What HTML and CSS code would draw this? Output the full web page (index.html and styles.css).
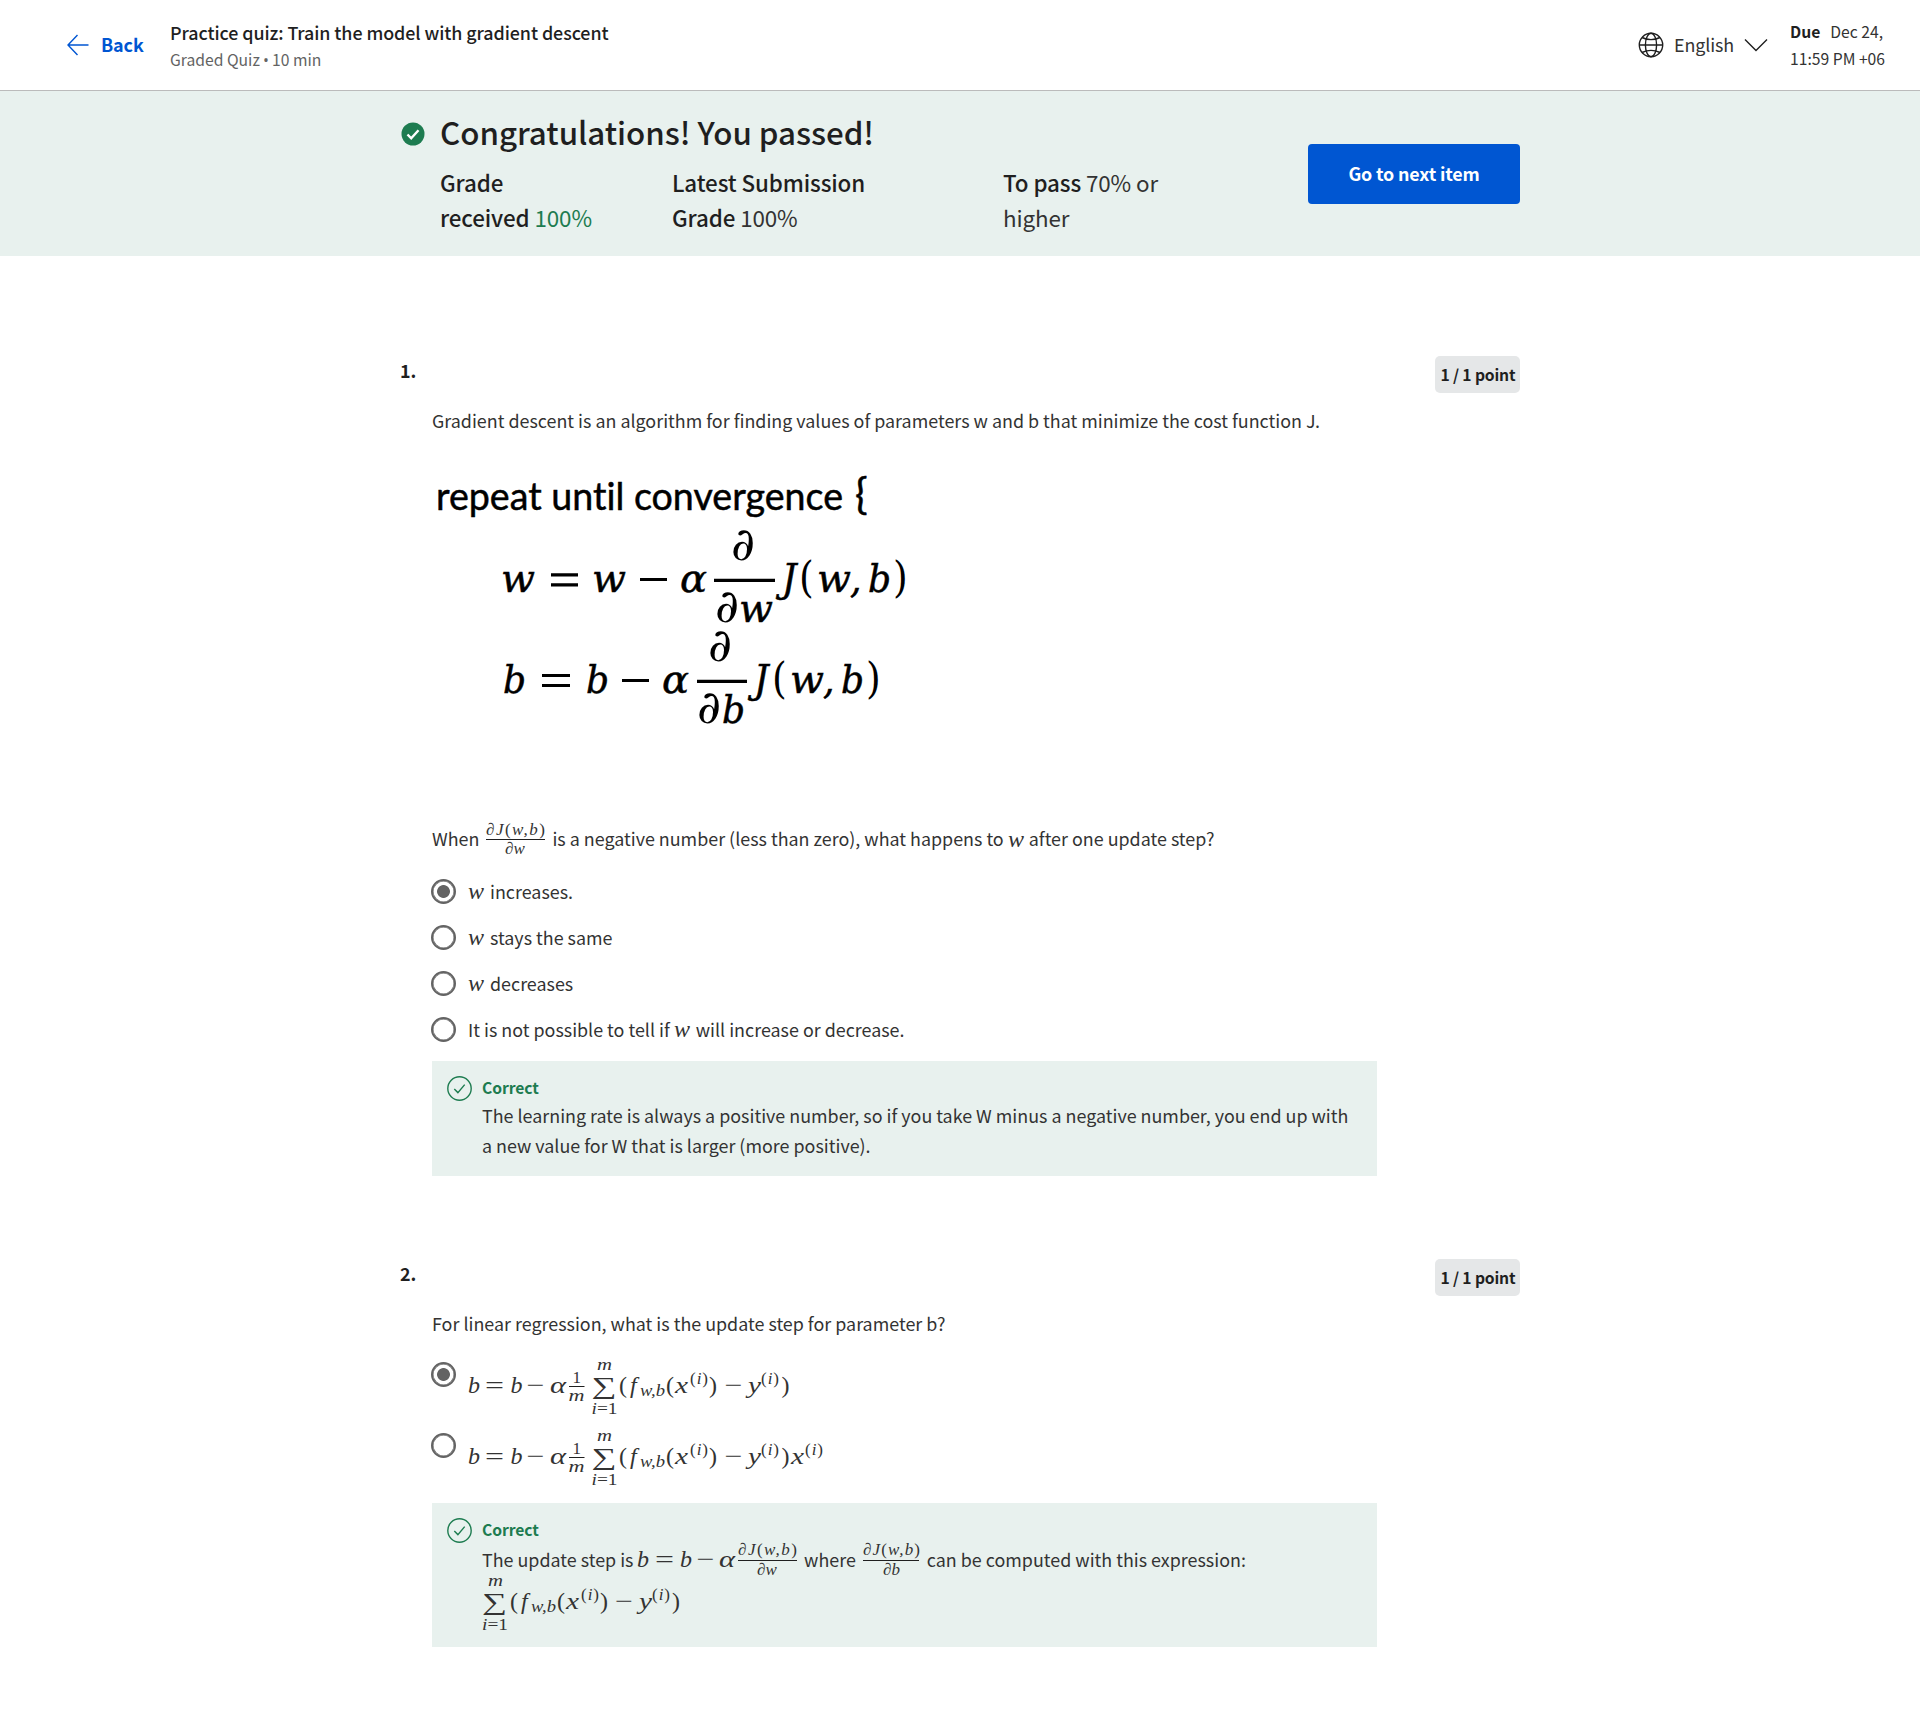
FILE: index.html
```html
<!DOCTYPE html>
<html lang="en">
<head>
<meta charset="utf-8">
<title>Practice quiz: Train the model with gradient descent</title>
<link rel="stylesheet" href="styles.css">
</head>
<body>
<header class="topbar">
  <a class="back">
    <svg class="arrow" width="22" height="22" viewBox="0 0 22 22"><path d="M21.5 11H1M10.5 1L1 11l9.500 10"/></svg>
    <span class="back-label">Back</span>
  </a>
  <div class="heading">
    <div class="title">Practice quiz: Train the model with gradient descent</div>
    <div class="subtitle">Graded Quiz <span class="dot">•</span> 10 min</div>
  </div>
  <div class="language">
    <svg class="globe" width="26" height="26" viewBox="0 0 26 26"><circle cx="13" cy="13" r="11.700"/><ellipse cx="13" cy="13" rx="5.600" ry="11.700"/><path d="M1.300 13h23.400M4 5.500q9 4.200 18 0M4 20.500q9-4.200 18 0"/></svg>
    <span class="language-name">English</span>
    <svg class="chevron" width="24" height="14" viewBox="0 0 24 14"><path d="M1 1.500l11 11 11-11"/></svg>
  </div>
  <div class="due"><b>Due</b><span class="due-date">Dec 24,</span><br>11:59 PM +06</div>
</header>

<section class="banner">
  <svg class="passed" width="24" height="24" viewBox="0 0 24 24"><circle cx="12" cy="12" r="11.500"/><path d="M6.500 12.500l3.700 3.800 7.300-8"/></svg>
  <div class="result">
    <h1>Congratulations! You passed!</h1>
    <div class="grades">
      <div class="grade received"><b>Grade<br>received</b> <span class="green">100%</span></div>
      <div class="grade latest"><b>Latest Submission<br>Grade</b> 100%</div>
      <div class="grade"><b>To pass</b> 70% or<br>higher</div>
    </div>
  </div>
  <button class="next">Go to next item</button>
</section>

<main>
  <section class="question">
    <div class="question-head"><span class="number">1.</span><span class="points">1 / 1 point</span></div>
    <div class="body">
      <p class="prompt intro">Gradient descent is an algorithm for finding values of parameters w and b that minimize the cost function J.</p>
      <svg class="algorithm" width="600" height="290" viewBox="432 460 600 290">
        <text class="plain" x="436" y="510" textLength="407" lengthAdjust="spacingAndGlyphs">repeat until convergence</text>
        <text class="brace" x="855" y="509">{</text>
        <g>
          <text x="501" y="592" textLength="34" lengthAdjust="spacingAndGlyphs">w</text><text x="592" y="592" textLength="34" lengthAdjust="spacingAndGlyphs">w</text><text x="680" y="592" textLength="27" lengthAdjust="spacingAndGlyphs">α</text>
          <text class="partial" x="731" y="559.500" textLength="24" lengthAdjust="spacingAndGlyphs">∂</text><text class="partial" x="715" y="622" textLength="24" lengthAdjust="spacingAndGlyphs">∂</text><text x="739" y="622" textLength="34" lengthAdjust="spacingAndGlyphs">w</text>
          <text x="782" y="592">J</text><text class="up" x="799" y="592">(</text><text x="817" y="592" textLength="34" lengthAdjust="spacingAndGlyphs">w</text><text x="850" y="592">,</text><text x="868" y="592">b</text><text class="up" x="893" y="592">)</text>
          <path d="M551 574.800h27M551 584.800h27M640 579.500h27M714 580.300h61"/>
        </g>
        <g>
          <text x="503" y="693">b</text><text x="586" y="693">b</text><text x="662" y="693" textLength="27" lengthAdjust="spacingAndGlyphs">α</text>
          <text class="partial" x="708" y="660.500" textLength="24" lengthAdjust="spacingAndGlyphs">∂</text><text class="partial" x="697" y="723" textLength="24" lengthAdjust="spacingAndGlyphs">∂</text><text x="722" y="723">b</text>
          <text x="754" y="693">J</text><text class="up" x="772" y="693">(</text><text x="790" y="693" textLength="34" lengthAdjust="spacingAndGlyphs">w</text><text x="823" y="693">,</text><text x="841" y="693">b</text><text class="up" x="866" y="693">)</text>
          <path d="M542 675.500h28M542 685.500h28M622 680.500h27M697 681.300h50"/>
        </g>
      </svg>
      <p class="prompt">When
        <svg class="math frac" width="59" height="40" viewBox="486 820 59 40"><text class="s" x="486" y="835.500" textLength="59">∂J<tspan class="r">(</tspan>w,b<tspan class="r">)</tspan></text><path d="M486 840.500h59"/><text class="s" x="505" y="855">∂w</text></svg>
        <span class="gap">is a negative number (less than zero), what happens to</span>
        <svg class="math var" width="17" height="20" viewBox="0 0 17 20"><text x="0" y="16.500">w</text></svg>
        after one update step?</p>
      <ul class="options">
        <li><i class="radio on"></i><svg class="math var" width="17" height="20" viewBox="0 0 17 20"><text x="0" y="16.500">w</text></svg><span>increases.</span></li>
        <li><i class="radio"></i><svg class="math var" width="17" height="20" viewBox="0 0 17 20"><text x="0" y="16.500">w</text></svg><span>stays the same</span></li>
        <li><i class="radio"></i><svg class="math var" width="17" height="20" viewBox="0 0 17 20"><text x="0" y="16.500">w</text></svg><span>decreases</span></li>
        <li><i class="radio"></i><span>It is not possible to tell if</span><svg class="math var" width="17" height="20" viewBox="0 0 17 20"><text x="0" y="16.500">w</text></svg><span>will increase or decrease.</span></li>
      </ul>
      <div class="feedback">
        <svg class="check" width="25" height="25" viewBox="0 0 25 25"><circle cx="12.500" cy="12.500" r="11.700"/><path d="M7.300 13l3.600 3.600 6.800-8"/></svg>
        <div>
          <div class="verdict">Correct</div>
          <p>The learning rate is always a positive number, so if you take W minus a negative number, you end up with<br>a new value for W that is larger (more positive).</p>
        </div>
      </div>
    </div>
  </section>

  <section class="question second">
    <div class="question-head"><span class="number">2.</span><span class="points">1 / 1 point</span></div>
    <div class="body">
      <p class="prompt">For linear regression, what is the update step for parameter b?</p>
      <ul class="options formulas">
        <li><i class="radio on"></i>
          <svg class="math" width="370" height="71" viewBox="468 1352 370 71">
            <text x="468" y="1393">b</text><text class="r" x="485" y="1393" textLength="19" lengthAdjust="spacingAndGlyphs">=</text><text x="510.500" y="1393">b</text><text class="r" x="526.500" y="1393" textLength="18" lengthAdjust="spacingAndGlyphs">−</text><text x="550" y="1393" textLength="16" lengthAdjust="spacingAndGlyphs">α</text>
            <text class="s r" x="572.500" y="1383">1</text><path d="M569 1386.500h15.500"/><text class="s" x="568.500" y="1401" textLength="16" lengthAdjust="spacingAndGlyphs">m</text>
            <text class="s" x="597" y="1370" textLength="15" lengthAdjust="spacingAndGlyphs">m</text><text class="sum" x="591.500" y="1394" textLength="25" lengthAdjust="spacingAndGlyphs">∑</text><text class="s" x="591.500" y="1413.500" textLength="26" lengthAdjust="spacingAndGlyphs">i<tspan class="r">=1</tspan></text>
            <text class="r" x="619" y="1393">(</text><text x="630" y="1393">f</text><text class="s" x="640" y="1396" textLength="25" lengthAdjust="spacingAndGlyphs">w,b</text><text class="r" x="666" y="1393">(</text><text x="675" y="1393" textLength="13" lengthAdjust="spacingAndGlyphs">x</text><text class="s" x="690" y="1384" textLength="18"><tspan class="r">(</tspan>i<tspan class="r">)</tspan></text><text class="r" x="709" y="1393">)</text><text class="r" x="724.500" y="1393" textLength="18" lengthAdjust="spacingAndGlyphs">−</text><text x="748" y="1393" textLength="13" lengthAdjust="spacingAndGlyphs">y</text><text class="s" x="761" y="1384" textLength="18"><tspan class="r">(</tspan>i<tspan class="r">)</tspan></text><text class="r" x="781.500" y="1393">)</text>
          </svg></li>
        <li><i class="radio"></i>
          <svg class="math" width="370" height="71" viewBox="468 1352 370 71">
            <text x="468" y="1393">b</text><text class="r" x="485" y="1393" textLength="19" lengthAdjust="spacingAndGlyphs">=</text><text x="510.500" y="1393">b</text><text class="r" x="526.500" y="1393" textLength="18" lengthAdjust="spacingAndGlyphs">−</text><text x="550" y="1393" textLength="16" lengthAdjust="spacingAndGlyphs">α</text>
            <text class="s r" x="572.500" y="1383">1</text><path d="M569 1386.500h15.500"/><text class="s" x="568.500" y="1401" textLength="16" lengthAdjust="spacingAndGlyphs">m</text>
            <text class="s" x="597" y="1370" textLength="15" lengthAdjust="spacingAndGlyphs">m</text><text class="sum" x="591.500" y="1394" textLength="25" lengthAdjust="spacingAndGlyphs">∑</text><text class="s" x="591.500" y="1413.500" textLength="26" lengthAdjust="spacingAndGlyphs">i<tspan class="r">=1</tspan></text>
            <text class="r" x="619" y="1393">(</text><text x="630" y="1393">f</text><text class="s" x="640" y="1396" textLength="25" lengthAdjust="spacingAndGlyphs">w,b</text><text class="r" x="666" y="1393">(</text><text x="675" y="1393" textLength="13" lengthAdjust="spacingAndGlyphs">x</text><text class="s" x="690" y="1384" textLength="18"><tspan class="r">(</tspan>i<tspan class="r">)</tspan></text><text class="r" x="709" y="1393">)</text><text class="r" x="724.500" y="1393" textLength="18" lengthAdjust="spacingAndGlyphs">−</text><text x="748" y="1393" textLength="13" lengthAdjust="spacingAndGlyphs">y</text><text class="s" x="761" y="1384" textLength="18"><tspan class="r">(</tspan>i<tspan class="r">)</tspan></text><text class="r" x="781.500" y="1393">)</text>
            <text x="791" y="1393" textLength="13" lengthAdjust="spacingAndGlyphs">x</text><text class="s" x="805" y="1384" textLength="18"><tspan class="r">(</tspan>i<tspan class="r">)</tspan></text>
          </svg></li>
      </ul>
      <div class="feedback tall">
        <svg class="check" width="25" height="25" viewBox="0 0 25 25"><circle cx="12.500" cy="12.500" r="11.700"/><path d="M7.300 13l3.600 3.600 6.800-8"/></svg>
        <div>
          <div class="verdict">Correct</div>
          <p class="line">The update step is
            <svg class="math frac first" width="160" height="40" viewBox="637 1540 160 40"><text x="637" y="1567.300">b</text><text class="r" x="655" y="1567.300" textLength="19" lengthAdjust="spacingAndGlyphs">=</text><text x="680" y="1567.300">b</text><text class="r" x="696.500" y="1567.300" textLength="18" lengthAdjust="spacingAndGlyphs">−</text><text x="719" y="1567.300" textLength="16" lengthAdjust="spacingAndGlyphs">α</text><text class="s" x="738" y="1555" textLength="59">∂J<tspan class="r">(</tspan>w,b<tspan class="r">)</tspan></text><path d="M738 1560.500h59"/><text class="s" x="757" y="1575">∂w</text></svg>
            <span class="gap">where</span>
            <svg class="math frac" width="57" height="40" viewBox="863 1540 57 40"><text class="s" x="863" y="1555" textLength="57">∂J<tspan class="r">(</tspan>w,b<tspan class="r">)</tspan></text><path d="M863 1560.500h56"/><text class="s" x="883" y="1575">∂b</text></svg>
            <span class="gap">can be computed with this expression:</span></p>
          <svg class="math block" width="220" height="60" viewBox="592 1358 220 60">
            <text class="s" x="598" y="1370" textLength="15" lengthAdjust="spacingAndGlyphs">m</text><text class="sum" x="592" y="1394" textLength="25" lengthAdjust="spacingAndGlyphs">∑</text><text class="s" x="592" y="1413.500" textLength="26" lengthAdjust="spacingAndGlyphs">i<tspan class="r">=1</tspan></text>
            <text class="r" x="620" y="1393">(</text><text x="631" y="1393">f</text><text class="s" x="641" y="1396" textLength="25" lengthAdjust="spacingAndGlyphs">w,b</text><text class="r" x="667" y="1393">(</text><text x="676" y="1393" textLength="13" lengthAdjust="spacingAndGlyphs">x</text><text class="s" x="691" y="1384" textLength="18"><tspan class="r">(</tspan>i<tspan class="r">)</tspan></text><text class="r" x="710" y="1393">)</text><text class="r" x="725" y="1393" textLength="18" lengthAdjust="spacingAndGlyphs">−</text><text x="749" y="1393" textLength="13" lengthAdjust="spacingAndGlyphs">y</text><text class="s" x="762" y="1384" textLength="18"><tspan class="r">(</tspan>i<tspan class="r">)</tspan></text><text class="r" x="782" y="1393">)</text>
          </svg>
        </div>
      </div>
    </div>
  </section>
</main>
</body>
</html>
```
FILE: styles.css
```css
* { box-sizing: border-box; }
body {
  margin: 0;
  min-height: 1727px;
  background: #fff;
  color: #333;
  font: 400 17.9px/30px "Noto Sans CJK SC", "Noto Sans", sans-serif;
}
h1, p, ul { margin: 0; padding: 0; }
svg { display: block; flex: none; overflow: visible; }
svg path, svg circle, svg ellipse { fill: none; stroke: #1f1f1f; stroke-width: 1.4; }

.topbar {
  display: flex;
  height: 91px;
  padding-left: 67px;
  border-bottom: 1px solid #bbb;
  white-space: nowrap;
}
.back { display: flex; align-items: center; gap: 12px; width: 103px; height: 90px; color: #0056d2; font-weight: 700; }
.back-label { margin-top: -2px; letter-spacing: -0.1px; }
.back .arrow path { stroke: #0056d2; }
.heading { width: 1468px; padding-top: 17px; }
.title { font-weight: 500; color: #1f1f1f; letter-spacing: -0.08px; }
.subtitle { font-size: 15.7px; line-height: 25px; color: #636363; }
.dot { font-family: "Open Sans", sans-serif; margin: 0 -0.4px; }
.language { display: flex; align-items: center; height: 90px; width: 152px; }
.language-name { width: 60px; margin: -2px 10px 0 10px; letter-spacing: -0.1px; }
.due { padding-top: 18px; font-size: 15.7px; line-height: 27px; }
.due b { margin-right: 10px; font-weight: 700; color: #1f1f1f; }

.banner { display: flex; height: 165px; padding: 20px 0 0 401px; background: #e8f1ee; white-space: nowrap; }
.passed { margin: 10.5px 15px 0 0; }
.passed circle { fill: #1d7c50; stroke: none; }
.passed path { stroke: #fff; stroke-width: 2.4; }
.result { width: 868px; padding-top: 1px; }
h1 { font-size: 31.3px; font-weight: 500; line-height: 40px; letter-spacing: -0.03px; color: #1f1f1f; }
.grades { display: flex; margin-top: 13px; font-size: 22.4px; line-height: 35px; }
.grade b { font-weight: 500; color: #1f1f1f; }
.grade { letter-spacing: -0.12px; }
.received { width: 232px; }
.latest { width: 331px; }
.green { color: #1d7c50; }
.next {
  width: 212px;
  height: 60px;
  margin-top: 33px;
  padding: 0 0 2px;
  border: 0;
  border-radius: 4px;
  background: #0056d2;
  color: #fff;
  font: 700 17.9px/30px "Noto Sans CJK SC", sans-serif;
  letter-spacing: -0.15px;
}

main { width: 1120px; margin: 100px 0 0 400px; }
.second { margin-top: 83px; }
.question-head { display: flex; justify-content: space-between; height: 49px; font-weight: 700; color: #1f1f1f; }
.number { line-height: 28px; }
.points { width: 85px; height: 37px; padding-left: 1px; border-radius: 5px; background: #e5e7e8; font-size: 15.7px; line-height: 38px; text-align: center; white-space: nowrap; letter-spacing: -0.15px; }
.body { width: 977px; padding-left: 32px; }
.prompt { height: 30px; white-space: nowrap; }
.algorithm { margin: 25px 0 73px; }
.algorithm text { font: italic 40px "DejaVu Serif Condensed", "DejaVu Serif", serif; fill: #000; stroke: #000; stroke-width: 0.5; }
.algorithm .partial { font-size: 46px; stroke: none; }
.algorithm .up { font-style: normal; font-size: 42px; stroke: none; }
.algorithm .plain { font: 39.5px Lato, sans-serif; font-variant-ligatures: none; }
.algorithm .brace { font: 42px Lato, sans-serif; }
.algorithm path { stroke: #000; stroke-width: 3.2; }

.math text { font: italic 24px "Liberation Serif", serif; fill: #333; }
.math .s { font-size: 17px; }
.math .r { font-style: normal; }
.math .sum { font-size: 24px; font-style: normal; }
.math path { stroke-width: 1; }
.prompt .math, .line .math { display: inline-block; }
.frac { height: 40px; margin: -10px 0 -10px 3px; vertical-align: -3px; }
.line .frac { vertical-align: -3px; }
.line .first { margin-left: -1px; }
.line .first + .gap { margin-left: 3.5px; }
.var { vertical-align: -4px; }
.gap { margin-left: 3px; }

.options { list-style: none; margin-top: 16px; }
.options li { display: flex; align-items: center; height: 46px; white-space: nowrap; }
.options li span { margin: -2px 4px 0 0; }
.options .var { margin-right: 5px; }
.radio { flex: none; width: 25px; height: 25px; margin: -1px 12px 0 -1px; border: 2px solid #636363; box-shadow: inset 0 0 0 0.5px #636363; border-radius: 50%; }
.on { background: radial-gradient(circle, #636363 6px, transparent 6.8px); }
.formulas { margin-top: 14px; }
.formulas li { height: 71px; align-items: flex-start; }
.formulas .radio { margin-top: 10px; }

.feedback { display: flex; width: 945px; height: 115px; margin-top: 8px; padding: 13px 0 0 15px; background: #e8f1ee; white-space: nowrap; }
.check { margin: 2px 10px 0 0; }
.check circle, .check path { stroke: #1d7c50; }
.verdict { height: 26px; color: #1d7c50; font-size: 15.7px; font-weight: 700; line-height: 28px; letter-spacing: -0.1px; }
.tall { height: 144px; margin-top: 9px; }
.line { height: 32px; line-height: 34px; }
```
